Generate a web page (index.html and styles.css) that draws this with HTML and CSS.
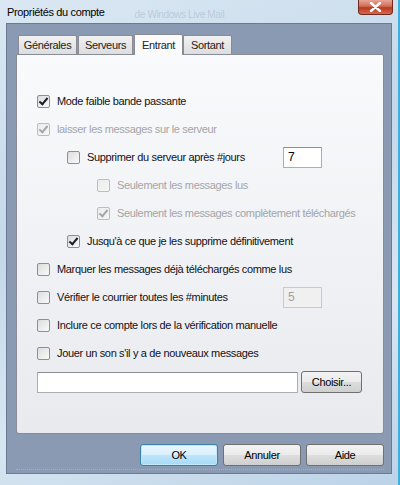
FILE: index.html
```html
<!DOCTYPE html>
<html lang="fr">
<head>
    <meta charset="UTF-8">
    <title>Propriétés du compte</title>
    <link rel="stylesheet" href="styles.css">
</head>
<body>

<div class="window">
    <div class="titlebar">
        <span class="title">Propriétés du compte</span>
        <span class="ghost">de Windows Live Mail</span>
        <span class="close"><svg width="13" height="10" viewBox="0 0 13 10"><path d="M2 1 L11 9 M11 1 L2 9" stroke="#fff" stroke-width="2.4" stroke-linecap="round"/></svg></span>
    </div>

    <div class="client">
        <div class="tabs">
            <div class="tab">Générales</div>
            <div class="tab">Serveurs</div>
            <div class="tab active">Entrant</div>
            <div class="tab">Sortant</div>
        </div>

        <div class="panel">
            <!-- Options de réception -->
            <div class="row">
                <span class="box checked"></span>
                <span class="label">Mode faible bande passante</span>
            </div>
            <div class="row disabled">
                <span class="box checked"></span>
                <span class="label">laisser les messages sur le serveur</span>
            </div>
            <div class="row indent1 has-input">
                <span class="box"></span>
                <span class="label">Supprimer du serveur après #jours</span>
                <span class="field small">7</span>
            </div>
            <div class="row indent2 disabled">
                <span class="box"></span>
                <span class="label">Seulement les messages lus</span>
            </div>
            <div class="row indent2 disabled">
                <span class="box checked"></span>
                <span class="label">Seulement les messages complètement téléchargés</span>
            </div>
            <div class="row indent1">
                <span class="box checked"></span>
                <span class="label">Jusqu'à ce que je les supprime définitivement</span>
            </div>
            <div class="row">
                <span class="box"></span>
                <span class="label">Marquer les messages déjà téléchargés comme lus</span>
            </div>
            <div class="row has-input">
                <span class="box"></span>
                <span class="label">Vérifier le courrier toutes les #minutes</span>
                <span class="field small off">5</span>
            </div>
            <div class="row">
                <span class="box"></span>
                <span class="label">Inclure ce compte lors de la vérification manuelle</span>
            </div>
            <div class="row">
                <span class="box"></span>
                <span class="label">Jouer un son s'il y a de nouveaux messages</span>
            </div>

            <!-- Fichier son -->
            <div class="file-row">
                <span class="field wide"></span>
                <span class="btn">Choisir...</span>
            </div>
        </div>

        <div class="buttons">
            <span class="btn big default">OK</span>
            <span class="btn big">Annuler</span>
            <span class="btn big">Aide</span>
        </div>
        <div class="dots"></div>
    </div>
</div>

</body>
</html>
```

FILE: styles.css
```css
body {
    margin: 0;
    font-family: "Liberation Sans", Arial, sans-serif;
    font-size: 11px;
    letter-spacing: -0.35px;
    color: #111118;
    white-space: nowrap;
}
.window {
    width: 400px;
    height: 485px;
    box-sizing: border-box;
    background: linear-gradient(160deg, #dbe8f3 0%, #c4d8ea 40%, #d8e6f1 70%, #bcd3e8 100%);
    border-right: 2px solid #3fb0de;
    display: flex;
    flex-direction: column;
}
.titlebar {
    height: 23px;
    display: flex;
    align-items: center;
    padding-left: 7px;
    position: relative;
}
.title {
    color: #000;
}
.ghost {
    margin-left: 30px;
    color: rgba(120, 140, 165, 0.3);
    font-size: 10px;
    padding-top: 6px;
}
.close {
    position: absolute;
    top: 0;
    right: 5px;
    width: 35px;
    height: 15px;
    box-sizing: border-box;
    border: 1px solid #6d2a20;
    border-top: none;
    border-radius: 0 0 4px 4px;
    background: linear-gradient(#e9a597 0%, #d26b55 45%, #b83a20 55%, #d7694a 100%);
    display: flex;
    align-items: center;
    justify-content: center;
}
.client {
    margin: 0 6px 0 6px;
    height: 451px;
    background: #8b9ab3;
    border: 1px solid #6b7a92;
    padding: 9px 7px 0 9px;
    box-sizing: border-box;
}
.tabs {
    display: flex;
    padding-left: 2px;
    height: 21px;
    align-items: flex-end;
}
.tab {
    height: 19px;
    box-sizing: border-box;
    border: 1px solid #898c95;
    border-bottom: none;
    border-radius: 2px 2px 0 0;
    background: linear-gradient(#f2f2f2, #dcdde0);
    display: flex;
    align-items: center;
    justify-content: center;
    color: #222;
    margin-right: 1px;
}
.tab:nth-child(1) { width: 59px; }
.tab:nth-child(2) { width: 55px; }
.tab:nth-child(3) { width: 49px; }
.tab:nth-child(4) { width: 49px; }
.tab.active {
    height: 21px;
    background: #fbfbfc;
    margin-bottom: -1px;
    position: relative;
    margin-right: 0;
}
.panel {
    height: 380px;
    box-sizing: border-box;
    border: 1px solid #898c95;
    border-radius: 0 2px 3px 3px;
    background: linear-gradient(#f9fafc, #e8eaee);
    padding: 32px 21px 0 20px;
}
.row {
    height: 28px;
    display: flex;
    align-items: center;
}
.indent1 { padding-left: 30px; }
.indent2 { padding-left: 60px; }
.has-input { padding-right: 40px; }
.box {
    width: 13px;
    height: 13px;
    box-sizing: border-box;
    border: 1px solid #8e8f8f;
    border-radius: 2px;
    background: linear-gradient(135deg, #dcdcdc, #fafafa);
    margin-right: 7px;
    flex: none;
    position: relative;
}
.box.checked::after {
    content: "";
    position: absolute;
    left: 3px;
    top: 0px;
    width: 3px;
    height: 7px;
    border: solid #1c1c2c;
    border-width: 0 2px 2px 0;
    transform: rotate(40deg);
}
.disabled .label {
    color: #a3a5a8;
}
.disabled .box {
    border-color: #bcbdbf;
    background: linear-gradient(135deg, #ececec, #f6f6f6);
}
.disabled .box.checked::after {
    border-color: #a5a7ab;
}
.field {
    height: 21px;
    box-sizing: border-box;
    border: 1px solid #abadb3;
    border-top-color: #8d8f94;
    background: #fff;
    display: flex;
    align-items: center;
    padding-left: 4px;
    color: #000;
    font-size: 12px;
}
.field.small {
    width: 39px;
    margin-left: auto;
}
.field.off {
    background: #f0f0f0;
    color: #a0a0a0;
    border-color: #c8c9cc;
}
.file-row {
    display: flex;
    align-items: center;
    margin-top: 4px;
}
.field.wide {
    width: 261px;
    margin-right: 3px;
}
.btn {
    height: 22px;
    box-sizing: border-box;
    border: 1px solid #707070;
    border-radius: 3px;
    background: linear-gradient(#f2f2f2 0%, #ebebeb 50%, #dddddd 51%, #cfcfcf 100%);
    display: flex;
    align-items: center;
    justify-content: center;
    width: 61px;
    color: #000;
}
.buttons {
    display: flex;
    justify-content: flex-end;
    gap: 5px;
    margin-top: 10px;
}
.btn.big {
    width: 78px;
}
.btn.default {
    border-color: #3c7fb1;
    background: linear-gradient(#eaf6fd 0%, #d9f0fc 50%, #bee6fd 51%, #a7d9f5 100%);
    box-shadow: inset 0 0 0 1px #c0e8fb;
}
.dots {
    margin-top: 3px;
    border-top: 1px dotted #a4b0c4;
}
```
